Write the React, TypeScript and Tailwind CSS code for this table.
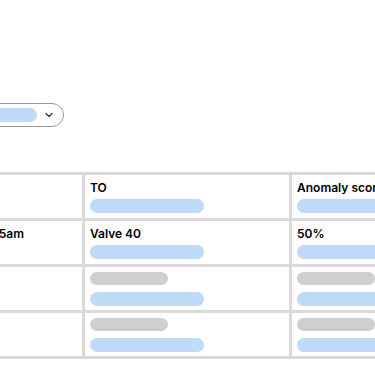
import { ChevronDown } from "lucide-react";

type Cell = { label?: string; skeleton?: boolean };

const rows: Cell[][] = [
  [{}, { label: "TO" }, { label: "Anomaly score" }],
  [{ label: "10:45am" }, { label: "Valve 40" }, { label: "50%" }],
  [{}, { skeleton: true }, { skeleton: true }],
  [{}, { skeleton: true }, { skeleton: true }],
];

// widths include the 3px right border
const colWidths = ["w-[116px]", "w-[207px]", "w-[207px]"];

const TableCell = ({ cell, index }: { cell: Cell; index: number }) => {
  const last = index === colWidths.length - 1;
  return (
    <div
      className={`${colWidths[index]} shrink-0 h-[43px] px-[5px] pt-[3px] ${
        last ? "" : "border-r-[3px] border-[#dadada]"
      }`}
    >
      {cell.label !== undefined && (
        <>
          <div className="text-[12px] leading-[20px] font-semibold text-black whitespace-nowrap">
            {cell.label}
          </div>
          {index > 0 && (
            <div className="mt-[1px] h-[14px] w-[114px] rounded-full bg-[#bfdbfa]" />
          )}
        </>
      )}
      {cell.skeleton && (
        <div className="pt-[2px] flex flex-col gap-[7px]">
          <div className="h-[13px] w-[78px] rounded-full bg-[#cfcfcf]" />
          <div className="h-[14px] w-[114px] rounded-full bg-[#bfdbfa]" />
        </div>
      )}
    </div>
  );
};

export default function App() {
  return (
    <div className="w-[375px] h-[366px] overflow-hidden bg-white font-['Inter',sans-serif]">
      <div className="pt-[103px] -ml-[46px]">
        <div className="w-[110px] h-[24px] rounded-full border border-[#999] flex items-center pl-[6px] pr-[8px]">
          <div className="h-[14px] w-[76px] rounded-full bg-[#bfdbfa]" />
          <ChevronDown className="ml-auto w-[12px] h-[12px] text-[#333]" strokeWidth={2.5} />
        </div>
      </div>

      <div className="mt-[45px] -ml-[34px] w-max border-[3px] border-[#dadada]">
        {rows.map((row, r) => (
          <div
            key={r}
            className={`flex ${r < rows.length - 1 ? "border-b-[3px] border-[#dadada]" : ""}`}
          >
            {row.map((cell, c) => (
              <TableCell key={c} cell={cell} index={c} />
            ))}
          </div>
        ))}
      </div>
    </div>
  );
}
